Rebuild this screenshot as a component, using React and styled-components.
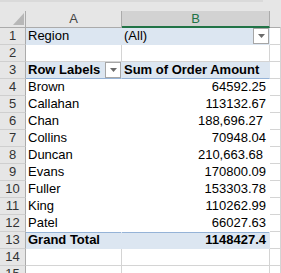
import styled, { createGlobalStyle } from 'styled-components';

const GlobalStyle = createGlobalStyle`
  html, body {
    margin: 0;
    padding: 0;
    background: #ffffff;
  }
  body {
    font-family: 'Liberation Sans', Arial, sans-serif;
    font-size: 13px;
    color: #000000;
  }
`;

const BLUE = '#dce6f1';
const BLUE_LINE = '#95b3d7';
const GRID = '#d4d4d4';
const HEAD_LINE = '#ababab';

const rows = [
  { name: 'Brown', value: '64592.25' },
  { name: 'Callahan', value: '113132.67' },
  { name: 'Chan', value: '188,696.27', trail: true },
  { name: 'Collins', value: '70948.04' },
  { name: 'Duncan', value: '210,663.68', trail: true },
  { name: 'Evans', value: '170800.09' },
  { name: 'Fuller', value: '153303.78' },
  { name: 'King', value: '110262.99' },
  { name: 'Patel', value: '66027.63' },
];

export default function App() {
  let n = 1;
  return (
    <>
      <GlobalStyle />
      <TopStrip>
        <StripBand />
      </TopStrip>
      <Sheet>
        <Corner>
          <svg width="11" height="12" viewBox="0 0 11 12">
            <polygon points="0,12 11,12 11,0" fill="#b7b7b7" />
          </svg>
        </Corner>
        <ColHeader>A</ColHeader>
        <ColHeader $active>B</ColHeader>
        <ColHeader $last />

        <RowHeader>{n++}</RowHeader>
        <Cell $fill={BLUE}>Region</Cell>
        <Cell $fill={BLUE}>
          (All)
          <DropButton />
        </Cell>
        <Cell $grid />

        <RowHeader>{n++}</RowHeader>
        <Cell $grid />
        <Cell $grid />
        <Cell $grid />

        <RowHeader>{n++}</RowHeader>
        <Cell $fill={BLUE} $bold $under>
          Row Labels
          <DropButton />
        </Cell>
        <Cell $fill={BLUE} $bold $under>
          Sum of Order Amount
        </Cell>
        <Cell $grid />

        {rows.map((r) => (
          <Row key={r.name} num={n++} name={r.name} value={r.value} trail={r.trail} />
        ))}

        <RowHeader>{n++}</RowHeader>
        <Cell $fill={BLUE} $bold $over>
          Grand Total
        </Cell>
        <Cell $fill={BLUE} $bold $over $right>
          1148427.4
        </Cell>
        <Cell $grid />

        <RowHeader>{n++}</RowHeader>
        <Cell $grid />
        <Cell $grid />
        <Cell $grid />

        <RowHeader>{n++}</RowHeader>
        <Cell $grid />
        <Cell $grid />
        <Cell $grid />
      </Sheet>
    </>
  );
}

function Row({ num, name, value, trail }) {
  return (
    <>
      <RowHeader>{num}</RowHeader>
      <Cell $fill="#ffffff">{name}</Cell>
      <Cell $fill="#ffffff" $right $trail={trail}>
        {value}
      </Cell>
      <Cell $grid />
    </>
  );
}

function DropButton() {
  return (
    <Drop>
      <svg width="7" height="4" viewBox="0 0 7 4">
        <polygon points="0,0 7,0 3.5,4" fill="#6b6b6b" />
      </svg>
    </Drop>
  );
}

const TopStrip = styled.div`
  height: 11px;
  background: #e6e6e6;
`;

const StripBand = styled.div`
  width: 263px;
  height: 2px;
  background: #dadada;
`;

const Sheet = styled.div`
  display: grid;
  grid-template-columns: 26px 96px 148px 1fr;
  grid-auto-rows: 17px;
  background: #e6e6e6;
`;

const Corner = styled.div`
  box-sizing: border-box;
  display: flex;
  align-items: flex-end;
  justify-content: flex-end;
  padding: 0 1px 2px 0;
  border-right: 1px solid ${HEAD_LINE};
  border-bottom: 1px solid ${HEAD_LINE};
  background: #e6e6e6;
`;

const ColHeader = styled.div`
  box-sizing: border-box;
  text-align: center;
  line-height: 16px;
  color: ${(p) => (p.$active ? '#217346' : '#444444')};
  background: ${(p) => (p.$active ? '#d2d2d2' : '#e6e6e6')};
  border-right: 1px solid ${(p) => (p.$last ? '#e6e6e6' : HEAD_LINE)};
  border-bottom: ${(p) => (p.$active ? '2px solid #217346' : `1px solid ${HEAD_LINE}`)};
`;

const RowHeader = styled.div`
  box-sizing: border-box;
  text-align: center;
  line-height: 16px;
  color: #333333;
  background: #e6e6e6;
  border-right: 1px solid ${HEAD_LINE};
  border-bottom: 1px solid #cfcfcf;
`;

const Cell = styled.div`
  box-sizing: border-box;
  display: flex;
  align-items: flex-start;
  justify-content: ${(p) => (p.$right ? 'flex-end' : 'flex-start')};
  padding: 0 ${(p) => (p.$trail ? '6px' : '3px')} 0 ${(p) => (p.$right ? '0' : '2px')};
  line-height: 16px;
  white-space: nowrap;
  overflow: hidden;
  font-weight: ${(p) => (p.$bold ? 700 : 400)};
  background: ${(p) => p.$fill || '#ffffff'};
  border-right: 1px solid ${(p) => (p.$grid ? GRID : p.$fill || '#ffffff')};
  border-bottom: 1px solid
    ${(p) => (p.$under ? BLUE_LINE : p.$grid ? GRID : p.$fill || '#ffffff')};
  box-shadow: ${(p) => (p.$over ? `inset 0 1px 0 ${BLUE_LINE}` : 'none')};
`;

const Drop = styled.div`
  box-sizing: border-box;
  flex: none;
  width: 16px;
  height: 16px;
  margin-left: auto;
  margin-right: -3px;
  display: flex;
  align-items: center;
  justify-content: center;
  background: #ffffff;
  border: 1px solid #a6a6a6;
`;
